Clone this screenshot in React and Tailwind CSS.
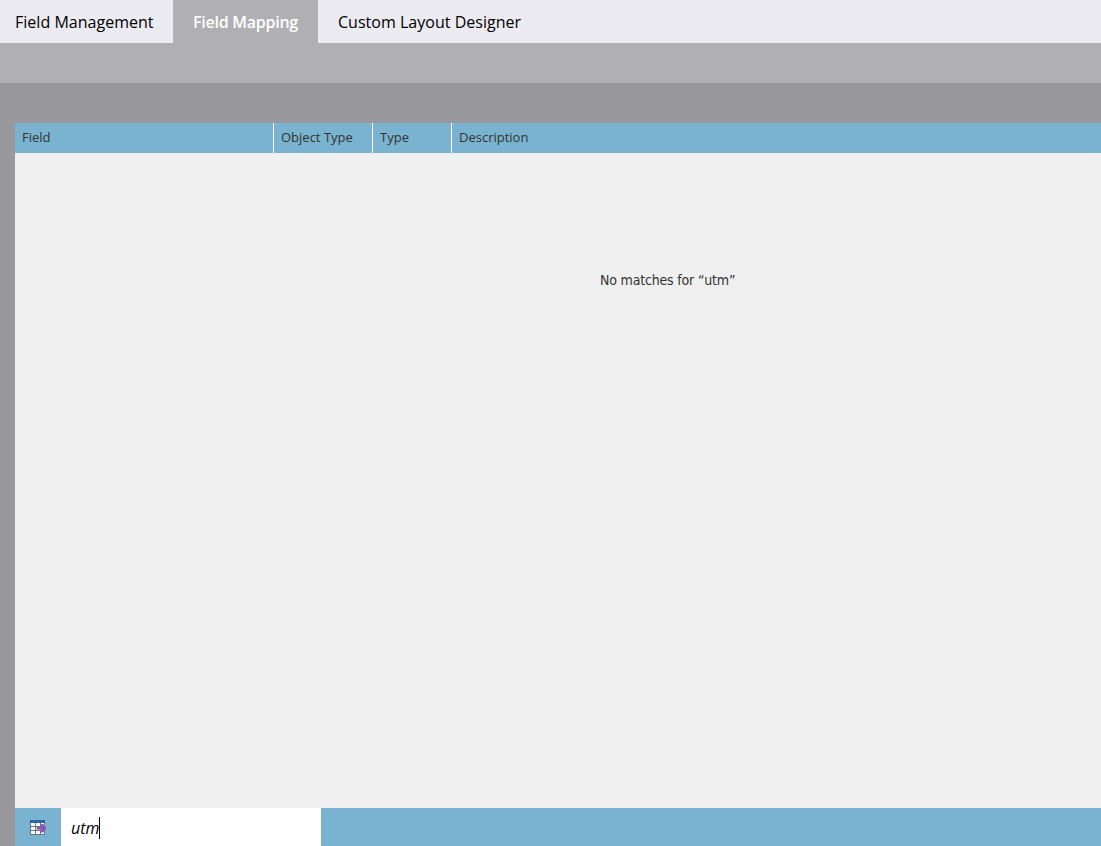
import { useState } from 'react';
import clsx from 'clsx';

const tabs = [
  { label: 'Field Management', width: 'w-[173px] pl-[15px]' },
  { label: 'Field Mapping', width: 'w-[145px] pl-[20px]' },
  { label: 'Custom Layout Designer', width: 'w-[223px] pl-[20px]' },
];

const columns = [
  { label: 'Field', width: 'w-[259px] border-r' },
  { label: 'Object Type', width: 'w-[99px] border-r' },
  { label: 'Type', width: 'w-[79px] border-r' },
  { label: 'Description', width: 'flex-1' },
];

function ExportIcon() {
  return (
    <svg width="17" height="16" viewBox="0 0 17 16">
      <rect x="0" y="0" width="15" height="15" fill="#66788a" />
      <rect x="0" y="0" width="15" height="3" fill="#2f66a5" />
      <rect x="1" y="3" width="4" height="3" fill="#fff" />
      <rect x="6" y="3" width="4" height="3" fill="#fff" />
      <rect x="11" y="3" width="3" height="3" fill="#fff" />
      <rect x="1" y="7" width="4" height="3" fill="#fff" />
      <rect x="6" y="7" width="4" height="3" fill="#d9cdea" />
      <rect x="11" y="7" width="3" height="3" fill="#fff" />
      <rect x="1" y="11" width="4" height="3" fill="#fff" />
      <rect x="6" y="11" width="4" height="3" fill="#fff" />
      <rect x="11" y="11" width="3" height="3" fill="#fff" />
      <path d="M7 7h5L10 4h3l3.500 4.300L13 12.500h-3l2-3H7z" fill="#8b52b5" />
    </svg>
  );
}

export default function App() {
  const [active, setActive] = useState('Field Mapping');
  const query = 'utm';

  return (
    <div className="flex h-screen flex-col overflow-hidden bg-[#99989d] font-['Open_Sans',sans-serif]">
      {/* Tabs */}
      <nav className="flex h-[43px] shrink-0 bg-[#ecebf1] text-base">
        {tabs.map((tab) => (
          <button
            key={tab.label}
            onClick={() => setActive(tab.label)}
            className={clsx(
              'h-full whitespace-nowrap text-left pt-px',
              tab.width,
              tab.label === active
                ? 'bg-[#b0afb4] font-semibold text-white tracking-[-0.25px]'
                : 'text-black tracking-[0.02px]'
            )}
          >
            {tab.label}
          </button>
        ))}
      </nav>
      <div className="h-10 shrink-0 bg-[#b0afb4]" />

      <main className="mt-10 ml-[15px] flex min-h-0 flex-1 flex-col bg-[#f0f0f0]">
        {/* Column headers */}
        <div className="flex h-[30px] shrink-0 bg-[#7ab3cf] text-[13px] text-[#333]">
          {columns.map((column) => (
            <div
              key={column.label}
              className={clsx('flex items-center border-white pb-px pl-[7px]', column.width)}
            >
              {column.label}
            </div>
          ))}
        </div>

        {/* Empty state */}
        <div className="flex-1 pt-[117px] pl-[585px]">
          <p className="text-[14px] leading-5 text-[#333] tracking-[-0.18px] font-['DejaVu_Sans_Condensed','DejaVu_Sans',sans-serif] font-stretch-condensed">
            No matches for “{query}”
          </p>
        </div>

        {/* Search */}
        <div className="flex h-[38px] shrink-0 bg-[#7ab3cf]">
          <button className="flex w-[46px] pt-3 pl-[15px]">
            <ExportIcon />
          </button>
          <div className="flex w-[260px] items-center bg-white pl-[10px] pt-[2px]">
            <span className="text-base italic text-black">{query}</span>
            <span className="h-[22px] w-px bg-black" />
          </div>
        </div>
      </main>
    </div>
  );
}
